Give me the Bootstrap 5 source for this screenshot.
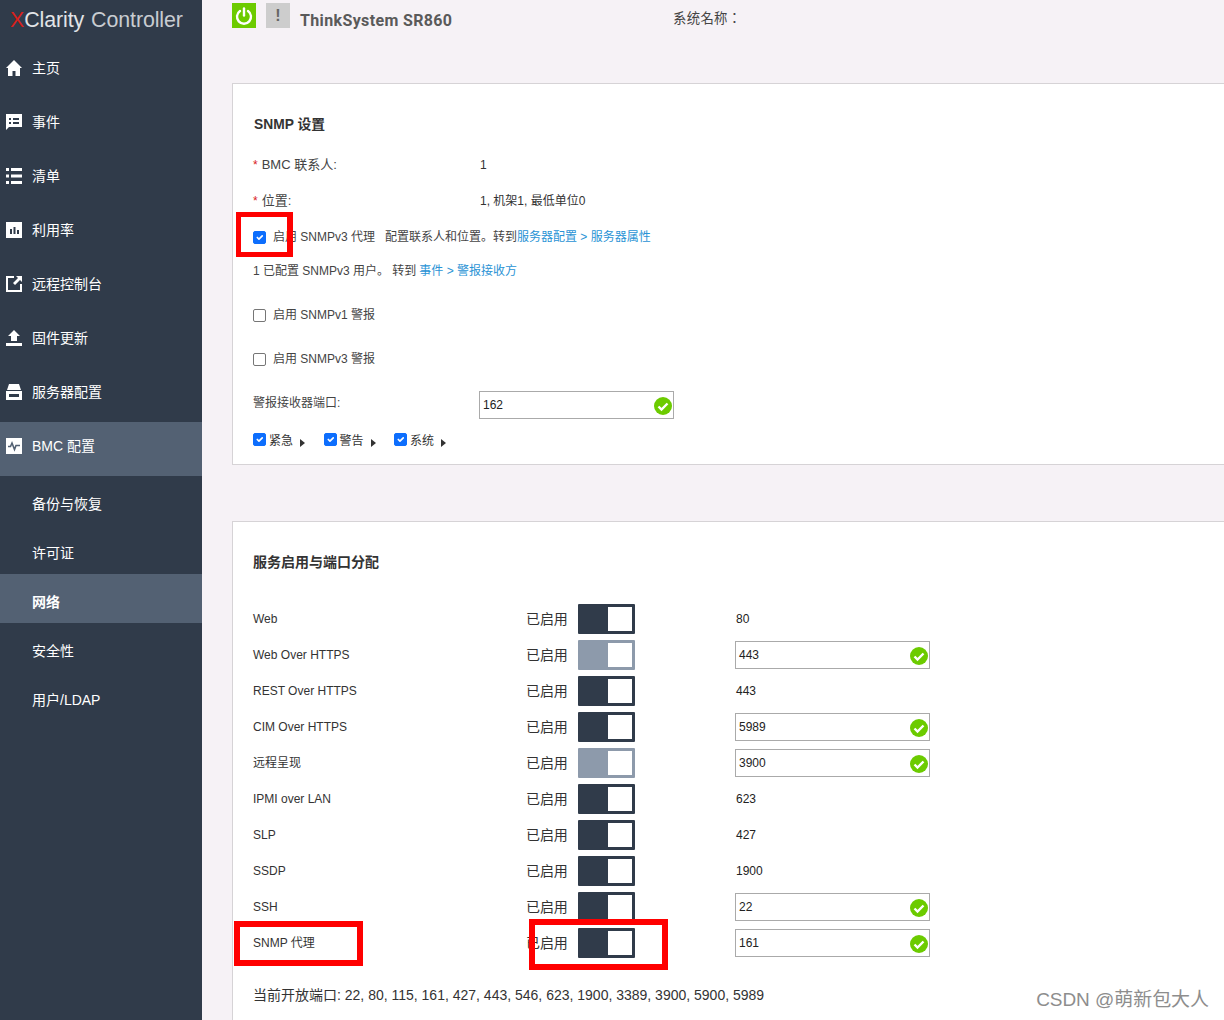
<!DOCTYPE html>
<html lang="en">
<head>
  <meta charset="UTF-8">
  <meta name="viewport" content="width=device-width, initial-scale=1.0">
  <title>XClarity Controller</title>
  <link href="https://cdn.jsdelivr.net/npm/bootstrap@5.3.0/dist/css/bootstrap.min.css" rel="stylesheet">
  <style>
    html, body { height: 1020px; overflow: hidden; }
    body {
      background: #f6f2f6;
      color: #333;
      font-family: "Liberation Sans", "Noto Sans CJK SC", sans-serif;
      font-size: 12px;
    }
    .page-wrap { height: 1020px; position: relative; overflow: hidden; }
    .side-bar { width: 202px; flex: none; background: #303b4a; height: 1020px; }
    .side-logo { height: 44px; padding-left: 10px; font-size: 21.4px; line-height: 41px; color: #c8ccd1; white-space: nowrap; letter-spacing: -.1px; }
    .side-logo b { color: #d9201c; font-weight: 400; }
    .side-logo span { color: #e2e4e7; }
    .side-logo i { font-style: normal; margin-left: 7px; }
    .side-link { height: 54px; padding: 0 0 6px 6px; display: flex; align-items: center; color: #fff; font-size: 14px; }
    .side-link:hover { color: #fff; }
    .side-link svg { width: 16px; height: 16px; margin-right: 10px; flex: none; }
    .side-link.on-item { background: #536173; }
    .sub-link { height: 49px; padding: 8px 0 0 32px; display: flex; align-items: center; color: #fff; font-size: 14px; }
    .sub-link:hover { color: #fff; }
    .sub-link.on-item { background: #536173; font-weight: 700; }
    .main-area { flex: 1; min-width: 0; padding-left: 30px; }
    .top-strip { height: 83px; padding-top: 3px; }
    .stat-box { width: 24px; height: 25px; display: flex; align-items: center; justify-content: center; }
    .stat-green { background: #6ccb00; }
    .stat-gray { background: #cdcdcd; margin-left: 10px; color: #666; font-weight: 700; font-size: 16px; }
    .model-name { font-family: Roboto, "Liberation Sans", sans-serif; font-weight: 700; font-size: 16px; color: #5a5a5a; margin-left: 10px; letter-spacing: .36px; line-height: 32px; margin-top: 2px; }
    .sys-name { position: absolute; left: 673px; top: 9px; font-size: 13.4px; letter-spacing: .3px; color: #444; font-family: "Liberation Sans", "Noto Sans CJK TC", sans-serif; }
    .panel-box { border: 1px solid #d6d3d6; border-right: 0; border-radius: 0; background: #fff; padding-left: 20px; }
    .panel-snmp { height: 382px; margin-bottom: 56px; }
    .panel-ports { height: 560px; border-bottom: 0; }
    .panel-title { font-size: 14px; font-weight: 700; color: #333; line-height: 20px; }
    .title-snmp { margin-top: 31px; margin-left: 1px; margin-bottom: 12px; font-size: 13.8px; }
    .title-ports { margin-top: 30px; margin-bottom: 29px; }
    .line-row { display: flex; align-items: center; white-space: nowrap; color: #444; }
    .row-36 { height: 36px; }
    .row-32 { height: 32px; margin-bottom: 6px; }
    .row-44 { height: 44px; }
    .line-label { width: 227px; flex: none; }
    .label-big { font-size: 13px; }
    .req-mark { color: #d9201c; margin-right: 4px; font-size: 12px; }
    .value-dark { color: #333; }
    .gap-text { margin-left: 10px; }
    .form-check-input.tick-box { width: 13px; height: 13px; margin: 0 7px 0 0; border-color: #767676; border-radius: 2px; flex: none; }
    .form-check-input.tick-box:checked { border-color: #0d6efd; }
    .text-blue { color: #2a93d5; text-decoration: none; }
    .link-gap { margin-left: 3px; }
    .port-field { width: 195px; height: 28px; border: 1px solid #aaa; display: flex; align-items: center; justify-content: space-between; padding: 0 0 0 3px; color: #222; background: #fff; }
    .port-field svg { width: 20px; height: 20px; flex: none; margin-top: 1px; }
    .port-alert { margin-top: 4px; margin-left: -1px; }
    .level-row { height: 20px; margin-top: 6px; }
    .level-item { display: flex; align-items: center; margin-right: 18.5px; color: #333; font-size: 12px; }
    .level-item .form-check-input.tick-box { margin: -3px 3px 0 0; }
    .level-arrow { width: 0; height: 0; border-left: 5px solid #333; border-top: 4px solid transparent; border-bottom: 4px solid transparent; margin-left: 7px; margin-top: 3px; }
    .svc-row { height: 36px; display: flex; align-items: center; color: #333; white-space: nowrap; }
    .svc-name { width: 274px; flex: none; }
    .svc-state { width: 52px; margin-left: -1px; flex: none; color: #333; font-size: 14px; letter-spacing: -.1px; }
    .svc-toggle { width: 57px; height: 30px; background: #303b4a; border-radius: 1px; padding: 3px; display: flex; justify-content: flex-end; flex: none; margin-right: 100px; }
    .svc-toggle.is-muted { background: #8d9aab; }
    .svc-toggle::after { content: ""; width: 24px; height: 24px; background: #fff; }
    .svc-plain { padding-left: 1px; color: #222; }
    .open-ports { margin-top: 24px; line-height: 20px; font-size: 14px; color: #333; }
    .mark-box { position: absolute; border: 6px solid #f00; pointer-events: none; }
    .mark-a { left: 236px; top: 212px; width: 57px; height: 45px; border-width: 5px 6px 5px 5px; }
    .mark-b { left: 234px; top: 921px; width: 129px; height: 45px; }
    .mark-c { left: 529px; top: 919px; width: 139px; height: 51px; }
    .water-mark { position: absolute; right: 15px; bottom: 7px; font-size: 19px; letter-spacing: -.05px; color: #8d8d8d; line-height: 26px; }
  </style>
</head>
<body>
<div class="page-wrap d-flex">
  <div class="side-bar">
    <div class="side-logo"><b>X</b><span>Clarity</span><i>Controller</i></div>
    <nav class="nav flex-column">
      <a class="nav-link side-link" href="#"><svg viewBox="0 0 16 16" fill="#fff"><path d="M8 0 0 8h2v8h4.500v-5h3v5H14V8h2z"/></svg>主页</a>
      <a class="nav-link side-link" href="#"><svg viewBox="0 0 16 16" fill="#fff"><path fill-rule="evenodd" d="M0 0h16v13H3l-3 3zM3 4v2h2V4zm4 0v2h6V4zM3 8v2h2V8zm4 0v2h6V8z"/></svg>事件</a>
      <a class="nav-link side-link" href="#"><svg viewBox="0 0 16 16" fill="#fff"><path d="M0 0h3v3H0zM5 0h11v3H5zM0 6.500h3v3H0zM5 6.500h11v3H5zM0 13h3v3H0zM5 13h11v3H5z"/></svg>清单</a>
      <a class="nav-link side-link" href="#"><svg viewBox="0 0 16 16" fill="#fff"><path fill-rule="evenodd" d="M0 0h16v16H0zM4 7v5h2V7zm3.500-2v7h2V5zM11 8v4h2V8z"/></svg>利用率</a>
      <a class="nav-link side-link" href="#"><svg viewBox="0 0 16 16" fill="#fff"><path d="M0 0h8v2H2v12h12V8h2v8H0z"/><path d="M10 0h6v6l-2-2-5 5-2-2 5-5z"/></svg>远程控制台</a>
      <a class="nav-link side-link" href="#"><svg viewBox="0 0 16 16" fill="#fff"><path d="M8 0l6 6h-3v5H5V6H2zM0 13h16v3H0z"/></svg>固件更新</a>
      <a class="nav-link side-link" href="#"><svg viewBox="0 0 16 16" fill="#fff"><path fill-rule="evenodd" d="M3 0h10l2 6H1zM0 7h16v9H0zm3 3v3h10v-3z"/></svg>服务器配置</a>
      <a class="nav-link side-link on-item" href="#"><svg viewBox="0 0 16 16"><path fill="#fff" d="M0 0h16v16H0z"/><path fill="none" stroke="#536173" stroke-width="1.600" d="M2 8.500h2.500L6 5l2.500 6.500L10 7.500h4"/></svg>BMC 配置</a>
      <a class="nav-link sub-link" href="#">备份与恢复</a>
      <a class="nav-link sub-link" href="#">许可证</a>
      <a class="nav-link sub-link on-item" href="#">网络</a>
      <a class="nav-link sub-link" href="#">安全性</a>
      <a class="nav-link sub-link" href="#">用户/LDAP</a>
    </nav>
  </div>

  <div class="main-area">
    <div class="top-strip d-flex align-items-start">
      <div class="stat-box stat-green"><svg width="20" height="20" viewBox="0 0 20 20" fill="none" stroke="#fff" stroke-width="2.400" stroke-linecap="round"><path d="M6 5a7 7 0 1 0 8 0"/><path d="M10 2.500v7"/></svg></div>
      <div class="stat-box stat-gray">!</div>
      <div class="model-name">ThinkSystem SR860</div>
    </div>
    <div class="sys-name">系统名称：</div>

    <div class="card panel-box panel-snmp">
      <div class="panel-title title-snmp">SNMP 设置</div>
      <div class="line-row row-36"><div class="line-label label-big"><span class="req-mark">*</span>BMC 联系人:</div><div class="value-dark">1</div></div>
      <div class="line-row row-36"><div class="line-label label-big"><span class="req-mark">*</span>位置:</div><div class="value-dark">1, 机架1, 最低单位0</div></div>
      <div class="line-row row-36"><input class="form-check-input tick-box" type="checkbox" checked><span>启用 SNMPv3 代理</span><span class="gap-text">配置联系人和位置。转到</span><a class="text-blue" href="#">服务器配置 &gt; 服务器属性</a></div>
      <div class="line-row row-32"><span>1 已配置 SNMPv3 用户。 转到 </span><a class="text-blue link-gap" href="#">事件 &gt; 警报接收方</a></div>
      <div class="line-row row-44"><input class="form-check-input tick-box" type="checkbox"><span>启用 SNMPv1 警报</span></div>
      <div class="line-row row-44"><input class="form-check-input tick-box" type="checkbox"><span>启用 SNMPv3 警报</span></div>
      <div class="line-row row-44"><div class="line-label">警报接收器端口:</div><div class="port-field port-alert"><span>162</span><svg viewBox="0 0 20 20"><circle cx="10" cy="10" r="9" fill="#6ccb00"/><path d="M5.500 10.500 8.500 13.500 14.500 7.500" fill="none" stroke="#fff" stroke-width="2.400"/></svg></div></div>
      <div class="line-row level-row">
        <div class="level-item"><input class="form-check-input tick-box" type="checkbox" checked>紧急<span class="level-arrow"></span></div>
        <div class="level-item"><input class="form-check-input tick-box" type="checkbox" checked>警告<span class="level-arrow"></span></div>
        <div class="level-item"><input class="form-check-input tick-box" type="checkbox" checked>系统<span class="level-arrow"></span></div>
      </div>
    </div>

    <div class="card panel-box panel-ports">
      <div class="panel-title title-ports">服务启用与端口分配</div>
      <div id="svcList"></div>
      <div class="open-ports">当前开放端口: 22, 80, 115, 161, 427, 443, 546, 623, 1900, 3389, 3900, 5900, 5989</div>
    </div>
  </div>

  <div class="mark-box mark-a"></div>
  <div class="mark-box mark-b"></div>
  <div class="mark-box mark-c"></div>
  <div class="water-mark">CSDN @萌新包大人</div>
</div>

<script src="https://cdn.jsdelivr.net/npm/bootstrap@5.3.0/dist/js/bootstrap.bundle.min.js"></script>
<script>
  const services = [
    ['Web', '80', false, false],
    ['Web Over HTTPS', '443', true, true],
    ['REST Over HTTPS', '443', false, false],
    ['CIM Over HTTPS', '5989', false, true],
    ['远程呈现', '3900', true, true],
    ['IPMI over LAN', '623', false, false],
    ['SLP', '427', false, false],
    ['SSDP', '1900', false, false],
    ['SSH', '22', false, true],
    ['SNMP 代理', '161', false, true]
  ];
  const okIcon = '<svg viewBox="0 0 20 20"><circle cx="10" cy="10" r="9" fill="#6ccb00"/><path d="M5.500 10.500 8.500 13.500 14.500 7.500" fill="none" stroke="#fff" stroke-width="2.400"/></svg>';
  document.getElementById('svcList').innerHTML = services.map(function (s) {
    const port = s[3]
      ? '<div class="port-field"><span>' + s[1] + '</span>' + okIcon + '</div>'
      : '<div class="svc-plain">' + s[1] + '</div>';
    return '<div class="svc-row"><div class="svc-name">' + s[0] + '</div><div class="svc-state">已启用</div><div class="svc-toggle' + (s[2] ? ' is-muted' : '') + '"></div>' + port + '</div>';
  }).join('');
</script>
</body>
</html>
